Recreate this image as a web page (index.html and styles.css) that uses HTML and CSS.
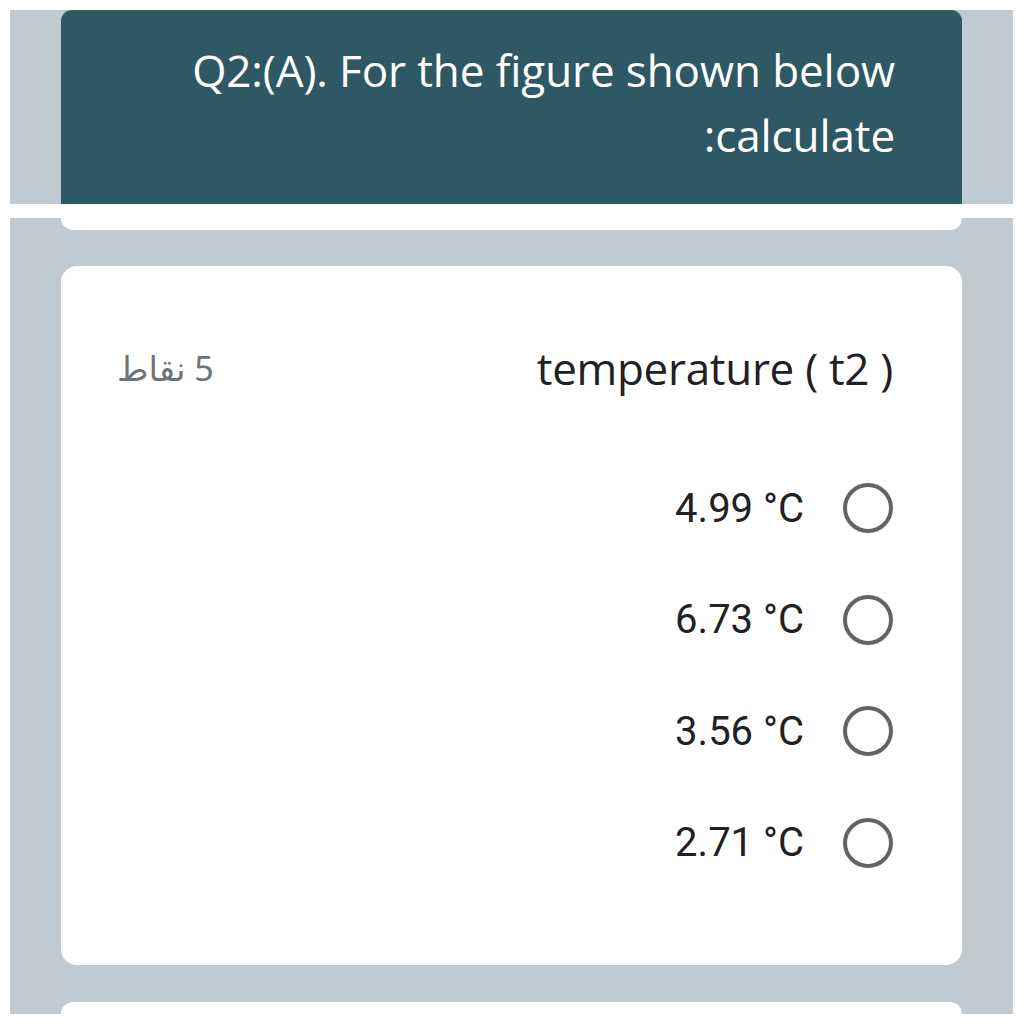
FILE: index.html
```html
<!DOCTYPE html>
<html lang="ar">
<head>
<meta charset="utf-8">
<link rel="stylesheet" href="styles.css">
</head>
<body>
  <div class="shot shot-top">
    <div class="header-card">
      <p class="header-text">Q2:(A). For the figure shown below</p>
      <p class="header-text">:calculate</p>
    </div>
  </div>
  <div class="shot shot-bottom">
    <div class="card-tail"></div>
    <div class="question-card">
      <div class="question-head">
        <span class="points">5 نقاط</span>
        <span class="question-title">temperature ( t2 )</span>
      </div>
      <ul class="options">
        <li class="option"><span class="option-label">4.99 °C</span><span class="radio"></span></li>
        <li class="option"><span class="option-label">6.73 °C</span><span class="radio"></span></li>
        <li class="option"><span class="option-label">3.56 °C</span><span class="radio"></span></li>
        <li class="option"><span class="option-label">2.71 °C</span><span class="radio"></span></li>
      </ul>
    </div>
    <div class="card-next"></div>
  </div>
</body>
</html>
```
FILE: styles.css
```css
html, body {
  margin: 0;
  padding: 0;
  background: #ffffff;
}
body {
  padding: 10px 11px 0 10px;
  width: 1003px;
  font-family: Roboto, "Noto Sans", sans-serif;
}
.shot {
  background: #bfcbd0;
  padding: 0 51px;
}
.shot-top {
  height: 194px;
  display: flex;
}
.header-card {
  flex: 1;
  background: #2d5864;
  border-radius: 11px 11px 0 0;
  padding: 28px 67px 0 0;
  box-sizing: border-box;
}
.header-text {
  margin: 0;
  text-align: right;
  color: #ffffff;
  font-family: "Open Sans", sans-serif;
  font-size: 44px;
  line-height: 65px;
  letter-spacing: -0.1px;
}
.shot-bottom {
  margin-top: 14px;
  height: 796px;
  display: flex;
  flex-direction: column;
}
.card-tail {
  height: 12px;
  background: #ffffff;
  border-radius: 0 0 14px 14px;
  margin-bottom: 36px;
}
.question-card {
  height: 699px;
  background: #ffffff;
  border-radius: 16px;
  padding: 78px 69px 0 56px;
  box-sizing: border-box;
}
.question-head {
  display: flex;
  justify-content: space-between;
  align-items: center;
  height: 48px;
}
.points {
  font-family: "Noto Sans", "DejaVu Sans", sans-serif;
  font-size: 34px;
  color: #6f7479;
  direction: rtl;
}
.question-title {
  font-family: "Open Sans", sans-serif;
  font-size: 44px;
  color: #202124;
  letter-spacing: -0.3px;
}
.options {
  list-style: none;
  margin: 0;
  padding: 91px 0 0 0;
  display: flex;
  flex-direction: column;
  gap: 61.5px;
}
.option {
  display: flex;
  justify-content: flex-end;
  align-items: center;
  gap: 39px;
  height: 50px;
}
.option-label {
  font-size: 40px;
  color: #202124;
}
.radio {
  width: 42px;
  height: 42px;
  border: 4.5px solid #616467;
  border-radius: 50%;
}
.card-next {
  margin-top: auto;
  height: 12px;
  background: #ffffff;
  border-radius: 14px 14px 0 0;
}
```
